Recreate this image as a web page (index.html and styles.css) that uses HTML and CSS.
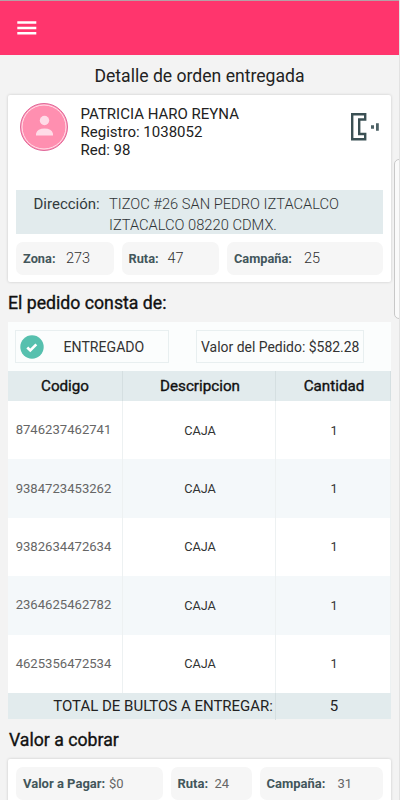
FILE: index.html
```html
<!DOCTYPE html>
<html lang="es">
<head>
<meta charset="utf-8">
<title>Detalle de orden entregada</title>
<link rel="stylesheet" href="styles.css">
</head>
<body>
<div class="screen">
  <header class="appbar">
    <svg class="menu" viewBox="0 0 20 15" width="20" height="15"><path d="M.3 1.600h19M.3 7h19M.3 12.200h19" stroke="#fff" stroke-width="2.500"/></svg>
  </header>
  <main>
    <h1 class="title">Detalle de orden entregada</h1>
    <section class="card customer">
      <div class="person">
        <svg class="avatar" viewBox="0 0 48 48" width="48" height="48"><circle cx="24" cy="24" r="23.500" fill="#ff8fb0" stroke="#e0699a"/><circle cx="24" cy="24" r="22" fill="none" stroke="#ffe3ec" stroke-width="1"/><circle cx="24.500" cy="17.500" r="4.700" fill="#ffdbe7"/><path d="M16 32.500v-2q1.500-5 8.500-5t8.500 5v2z" fill="#ffdbe7"/></svg>
        <div class="details">
          <div class="name">PATRICIA HARO REYNA</div>
          <div class="reg">Registro: 1038052</div>
          <div class="red">Red: 98</div>
        </div>
        <svg class="phone" viewBox="0 0 30 30" width="30" height="30"><path d="M2.200 2.200h13v5.300h-6v14.500h6v5.300h-13z" fill="none" stroke="#3b5054" stroke-width="2.400"/><path d="M21 13.200h3v3.600h-3zM26 11.200h2.800v7.600h-2.800z" fill="#4d6165"/></svg>
      </div>
      <div class="address"><span class="address-label">Dirección:</span><div class="lines"><div>TIZOC #26 SAN PEDRO IZTACALCO</div><div>IZTACALCO 08220 CDMX.</div></div></div>
      <div class="pills">
        <div class="pill"><b class="zone">Zona:</b><span class="big">273</span></div>
        <div class="pill"><b class="route">Ruta:</b><span class="big">47</span></div>
        <div class="pill"><b class="campaign">Campaña:</b><span class="big">25</span></div>
      </div>
    </section>
    <h2 class="order-heading">El pedido consta de:</h2>
    <section class="order">
      <div class="status">
        <div class="box delivered"><svg viewBox="0 0 24 24" width="24" height="24"><circle cx="12" cy="12" r="11.700" fill="#56c0ae"/><path d="M7.300 12.500l3 2.900 6-6" fill="none" stroke="#fff" stroke-width="2.700"/></svg><span>ENTREGADO</span></div>
        <div class="box value"><span>Valor del Pedido: $582.28</span></div>
      </div>
      <div class="row head"><div>Codigo</div><div>Descripcion</div><div>Cantidad</div></div>
      <div class="row item"><div class="code">8746237462741</div><div>CAJA</div><div>1</div></div>
      <div class="row item alt"><div class="code">9384723453262</div><div>CAJA</div><div>1</div></div>
      <div class="row item"><div class="code">9382634472634</div><div>CAJA</div><div>1</div></div>
      <div class="row item alt"><div class="code">2364625462782</div><div>CAJA</div><div>1</div></div>
      <div class="row item"><div class="code">4625356472534</div><div>CAJA</div><div>1</div></div>
      <div class="total"><div>TOTAL DE BULTOS A ENTREGAR:</div><div>5</div></div>
    </section>
    <h2 class="charge-heading">Valor a cobrar</h2>
    <section class="card charge">
      <div class="pills">
        <div class="pill"><b class="pay">Valor a Pagar:</b><span>$0</span></div>
        <div class="pill"><b class="route">Ruta:</b><span>24</span></div>
        <div class="pill"><b class="campaign">Campaña:</b><span>31</span></div>
      </div>
    </section>
  </main>
  <div class="side-handle"></div>
</div>
</body>
</html>
```

FILE: styles.css
```css
* { box-sizing: border-box; }
body { margin: 0; font-family: Roboto, sans-serif; color: #222; }
.screen { position: relative; height: 800px; overflow: hidden; background: #f3f3f3; border-right: 1px solid #e2e2e2; }
.appbar { height: 55px; background: #ff356d; border-top: 1px solid #b5a0a6; padding: 20px 0 0 17px; }
.menu { display: block; }
main { padding: 0 8px; }
h1, h2 { margin: 0; white-space: nowrap; }
.title { height: 40px; padding-top: 1px; line-height: 41px; font-size: 17.600px; font-weight: 400; text-align: center; }
.card { background: #fff; border-radius: 2px; box-shadow: 0 0 3px rgba(0,0,0,.18); width: 383px; }
.customer { height: 187px; padding: 8px 8px 0; }
.person { height: 87px; display: flex; }
.avatar { margin-left: 4px; flex: none; }
.details { margin-left: 12.600px; width: 269.400px; padding-top: 3px; font-size: 15px; line-height: 17.800px; white-space: nowrap; }
.phone { margin-top: 9px; flex: none; }
.address { height: 44px; background: #e2ebed; padding: 4px 0 0 17.500px; display: flex; line-height: 20.500px; white-space: nowrap; }
.address-label { width: 75.500px; color: #333b3d; font-size: 15px; }
.lines { font-size: 14.700px; font-weight: 300; color: #303436; }
.pills { display: grid; grid-template-columns: 97.500px 97.500px 156px; gap: 8px; padding-top: 8px; }
.pill { height: 33px; border-radius: 7px; background: #f6f6f6; display: flex; align-items: center; padding-left: 7px; font-size: 12.800px; white-space: nowrap; color: #666; }
.pill b { color: #43565b; font-weight: 700; }
.pill .big { font-size: 14.500px; font-weight: 300; color: #303030; margin-top: -1px; }
.customer .zone { width: 43px; }
.customer .route { width: 39px; }
.customer .campaign { width: 70px; }
.order-heading, .charge-heading { height: 40px; line-height: 42px; font-size: 17.700px; font-weight: 400; color: #111; -webkit-text-stroke: .35px #111; }
.order { width: 383px; }
.status { height: 49px; background: #fbfdfd; padding: 8px 7px; display: flex; gap: 27px; }
.box { height: 33px; border: 1px solid #e8eff0; display: flex; align-items: center; font-size: 14.100px; white-space: nowrap; color: #333; }
.delivered { width: 154px; padding-left: 4px; gap: 19.600px; }
.value { width: 168px; padding-left: 4px; font-size: 13.950px; }
.row { display: grid; grid-template-columns: 115px 153px 115px; }
.row > div { display: flex; align-items: center; justify-content: center; border-right: 1px solid #edf1f2; }
.row > div + div { padding-left: 2px; }
.head { height: 30px; background: #e2ebed; font-size: 15.200px; color: #111; -webkit-text-stroke: .35px #111; }
.head > div { border-color: #d5dfe1; }
.item { height: 58.400px; background: #fff; font-size: 12.700px; color: #333; }
.alt { background: #f4f8fa; }
.item .code { font-size: 13.100px; color: #666; padding: 0 3px 1px 0; }
.total { height: 26px; background: #e2ebed; display: grid; grid-template-columns: 268px 115px; align-items: center; font-size: 15px; line-height: 27px; text-align: center; white-space: nowrap; }
.total > div:first-child { text-align: right; padding-right: 2px; border-right: 1px solid #d5dfe1; }
.total > div:last-child { padding-left: 1px; }
.charge-heading { padding-left: 1px; }
.charge { height: 60px; padding: 0 8px; }
.charge .pills { grid-template-columns: 146.500px 81px 123px; }
.charge .pill { font-size: 13px; }
.charge .pay { width: 86px; }
.charge .route { width: 37px; }
.charge .campaign { width: 71px; }
.side-handle { position: absolute; right: -5px; top: 159px; width: 10px; height: 160px; border: 1px solid #c8c8c8; border-radius: 5px; background: #fafafa; }
```
